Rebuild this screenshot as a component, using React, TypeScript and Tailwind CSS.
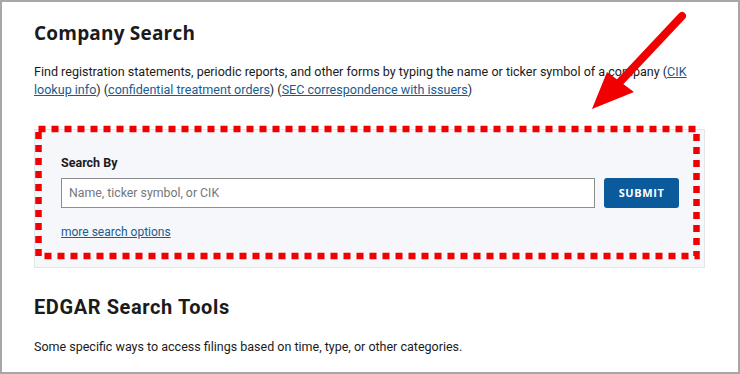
import React from "react";

export default function App() {
  return (
    <div className="relative w-[740px] h-[374px] overflow-hidden bg-white border-2 border-[#a9a6a7]">
      <div className="pl-[32px] pr-[20px] pt-[17px]">
        <h1 className="text-[19px] leading-[28px] font-bold text-[#1b1b1b] tracking-[0.2px]" style={{ fontFamily: '"Open Sans", sans-serif' }}>
          Company Search
        </h1>
        <p className="mt-[16px] w-[658px] text-[12.55px] leading-[18px] text-[#1b1b1b]" style={{ fontFamily: 'Roboto, "Liberation Sans", sans-serif' }}>
          Find registration statements, periodic reports, and other forms by typing the name or ticker symbol of a company (
          <a className="text-[#1a5c8e] underline">CIK lookup info</a>) (
          <a className="text-[#1a5c8e] underline">confidential treatment orders</a>) (
          <a className="text-[#1a5c8e] underline">SEC correspondence with issuers</a>)
        </p>
        <div className="mt-[30px] w-[671px] h-[139px] border border-[#e4e5e9] bg-[#f6f7fb] pl-[26px] pr-[25px] pt-[24px]" style={{ fontFamily: 'Roboto, "Liberation Sans", sans-serif' }}>
          <div className="text-[12.5px] font-bold leading-[18px] text-[#1b1b1b]">Search By</div>
          <div className="mt-[6px] flex items-center gap-[9px]">
            <div className="w-[534px] h-[30px] bg-white border border-[#8d8d8d] flex items-center pl-[7px] text-[12.3px] text-[#73777b]">
              Name, ticker symbol, or CIK
            </div>
            <div className="w-[75px] h-[30px] rounded-[3px] bg-[#0a5a9c] flex items-center justify-center text-white text-[11px] font-bold tracking-[0.6px]" style={{ fontFamily: '"Open Sans", sans-serif' }}>
              SUBMIT
            </div>
          </div>
          <div className="mt-[16px] text-[12px] leading-[16px] text-[#1a5c8e] underline">more search options</div>
        </div>
        <h2 className="mt-[25px] text-[20px] leading-[28px] font-bold text-[#1b1b1b] tracking-[0.6px]" style={{ fontFamily: 'Roboto, "Liberation Sans", sans-serif' }}>
          EDGAR Search Tools
        </h2>
        <p className="mt-[17px] text-[12.5px] leading-[18px] text-[#1b1b1b]" style={{ fontFamily: 'Roboto, "Liberation Sans", sans-serif' }}>
          Some specific ways to access filings based on time, type, or other categories.
        </p>
      </div>
      <svg className="absolute left-[-2px] top-[-2px] pointer-events-none" width="740" height="374" viewBox="0 0 740 374">
        <rect x="38.5" y="129" width="658" height="127" fill="none" stroke="#f00000" strokeWidth="6.5" strokeDasharray="7 6" />
        <line x1="682" y1="16" x2="618" y2="84" stroke="#f00000" strokeWidth="8" strokeLinecap="round" />
        <polygon points="592,109 607,72 634,92" fill="#f00000" />
      </svg>
    </div>
  );
}
